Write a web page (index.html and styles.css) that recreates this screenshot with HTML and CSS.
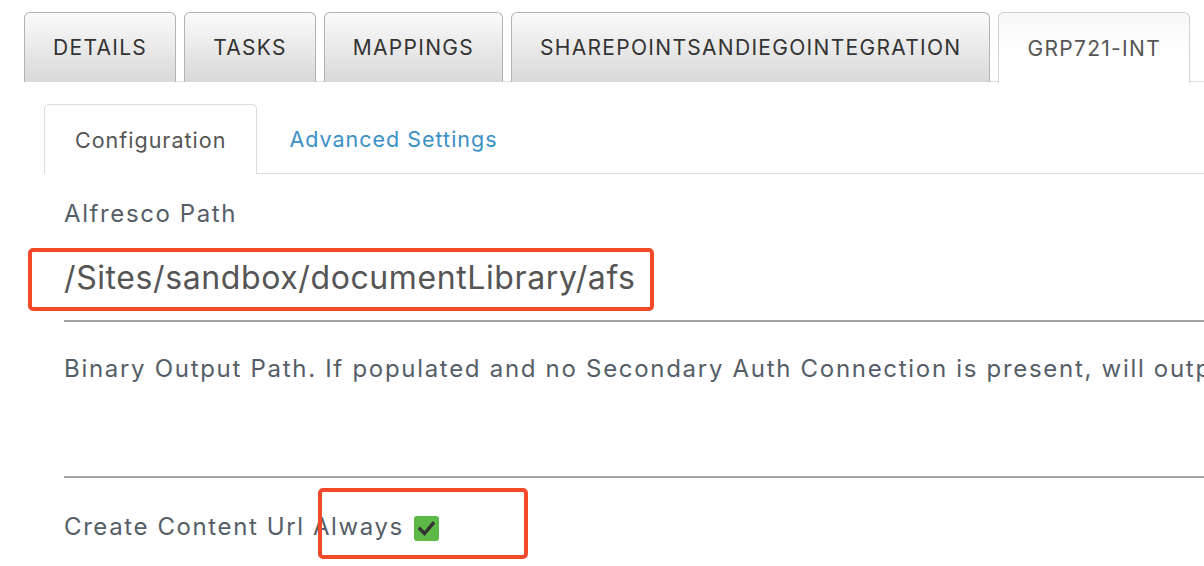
FILE: index.html
```html
<!DOCTYPE html>
<html>
<head>
<meta charset="utf-8">
<link rel="stylesheet" href="styles.css">
</head>
<body>
<div class="page">
  <nav class="tabs">
    <div class="tab">DETAILS</div>
    <div class="tab">TASKS</div>
    <div class="tab">MAPPINGS</div>
    <div class="tab">SHAREPOINTSANDIEGOINTEGRATION</div>
    <div class="tab active">GRP721-INT</div>
  </nav>
  <div class="panel">
    <nav class="subtabs">
      <div class="subtab active">Configuration</div>
      <div class="subtab link">Advanced Settings</div>
    </nav>
    <div class="form">
      <div class="field">
        <label class="label">Alfresco Path</label>
        <div class="value">/Sites/sandbox/documentLibrary/afs</div>
      </div>
      <div class="field tall">
        <label class="label">Binary Output Path. If populated and no Secondary Auth Connection is present, will output binaries to this path</label>
        <div class="value empty"></div>
      </div>
      <div class="check-row">
        <span class="label">Create Content Url Always</span>
        <span class="checkbox">
          <svg width="17" height="15" viewBox="0 0 17 15"><path d="M2 8 L6.5 12.5 L15 2.5" fill="none" stroke="#333" stroke-width="3.4" stroke-linecap="square"/></svg>
        </span>
      </div>
    </div>
  </div>
</div>
<div class="highlight hl-path"></div>
<div class="highlight hl-check"></div>
</body>
</html>
```

FILE: styles.css
```css
html, body {
  margin: 0;
  padding: 0;
  background: #fff;
  overflow: hidden;
}
body {
  font-family: Inter, "Open Sans", sans-serif;
  color: #555e67;
  width: 1204px;
  height: 566px;
  position: relative;
}
.page {
  padding: 12px 0 0 24px;
}
.tabs {
  display: flex;
  gap: 8px;
  border-bottom: 1px solid #dedede;
  height: 70px;
  box-sizing: border-box;
}
.tab {
  height: 70px;
  box-sizing: border-box;
  padding: 0 28px;
  display: flex;
  align-items: center;
  font-size: 21px;
  letter-spacing: 1.3px;
  color: #333;
  border: 1.5px solid #b3b3b3;
  border-bottom: none;
  border-radius: 6px 6px 0 0;
  background: linear-gradient(#fbfbfb, #d8d8d8);
  white-space: nowrap;
}
.tab.active {
  background: linear-gradient(#f7f7f7, #fff 60%);
  border-color: #d0d0d0;
  color: #555;
  height: 71px;
  margin-bottom: -1px;
}
.panel {
  padding: 22px 0 0 20px;
}
.subtabs {
  display: flex;
  height: 70px;
  box-sizing: border-box;
}
.subtab {
  padding: 0 30px;
  display: flex;
  align-items: center;
  font-size: 21.5px;
  letter-spacing: 1px;
  white-space: nowrap;
  box-sizing: border-box;
  height: 70px;
}
.subtab.active {
  color: #555;
  border: 1.5px solid #dcdcdc;
  border-bottom: none;
  border-radius: 5px 5px 0 0;
}
.subtab.link {
  color: #3b90c6;
  padding-left: 32px;
  flex: 1;
  border-bottom: 1.5px solid #dcdcdc;
}
.form {
  padding-left: 20px;
}
.field {
  display: flex;
  flex-direction: column;
}
.label {
  font-size: 24px;
  letter-spacing: 1.6px;
  color: #555e67;
  white-space: nowrap;
  line-height: 28px;
}
.field .label {
  margin-top: 26px;
}
.value {
  font-size: 32px;
  letter-spacing: 0.6px;
  color: #555;
  line-height: 40px;
  padding: 30px 0 22px;
  border-bottom: 2px solid #a3a3a3;
  white-space: nowrap;
}
.field.tall .label {
  margin-top: 33px;
  letter-spacing: 1.7px;
}
.value.empty {
  height: 95px;
  padding: 0;
  box-sizing: border-box;
}
.check-row {
  display: flex;
  align-items: center;
  gap: 10px;
  height: 98px;
}
.checkbox {
  width: 25px;
  height: 25px;
  border-radius: 3px;
  background: #5db947;
  display: flex;
  align-items: center;
  justify-content: center;
  margin-top: 2px;
}
.highlight {
  position: absolute;
  border: 4px solid #f2492a;
  border-radius: 5px;
  box-sizing: border-box;
  pointer-events: none;
}
.hl-path {
  left: 28px;
  top: 248px;
  width: 626px;
  height: 63px;
}
.hl-check {
  left: 318px;
  top: 488px;
  width: 210px;
  height: 71px;
}
```
